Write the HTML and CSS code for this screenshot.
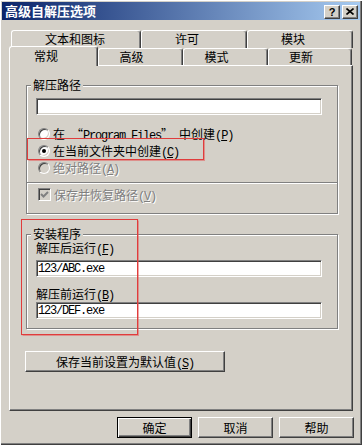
FILE: index.html
```html
<!DOCTYPE html>
<html lang="zh-CN">
<head>
  <meta charset="UTF-8">
  <title>高级自解压选项</title>
  <link rel="stylesheet" href="styles.css">
</head>
<body>
  <div class="window">
    <!-- Title bar -->
    <div class="titlebar">
      <span class="title">高级自解压选项</span>
      <div class="caption">
        <span class="cap-btn">?</span>
        <span class="cap-btn">
          <svg width="8" height="7" viewBox="0 0 8 7"><path d="M0.5 0.5 L7.5 6.5 M7.5 0.5 L0.5 6.5" stroke="#000" stroke-width="1.6"/></svg>
        </span>
      </div>
    </div>

    <div class="content">
      <!-- Tabs -->
      <div class="tab-row back">
        <div class="tab wide">文本和图标</div>
        <div class="tab">许可</div>
        <div class="tab">模块</div>
      </div>
      <div class="tab-row front">
        <div class="tab active">常规</div>
        <div class="tab">高级</div>
        <div class="tab">模式</div>
        <div class="tab last">更新</div>
      </div>

      <!-- Tab page -->
      <div class="panel">
        <fieldset class="group path">
          <legend>解压路径</legend>
          <input class="field" type="text" value="">

          <div class="options">
            <div class="option">
              <span class="radio"></span>
              <span>在<span class="en"> </span>“<span class="en">Program Files</span>”<span class="en"> </span>中创建<span class="en">(<u>P</u>)</span></span>
            </div>
            <div class="option">
              <span class="radio checked"></span>
              <span>在当前文件夹中创建<span class="en">(<u>C</u>)</span></span>
            </div>
            <div class="option disabled">
              <span class="radio"></span>
              <span>绝对路径<span class="en">(<u>A</u>)</span></span>
            </div>
          </div>

          <div class="separator"></div>

          <div class="option disabled">
            <span class="check">
              <svg width="11" height="11" viewBox="0 0 11 11"><polyline points="2,5 4.5,7.5 9,3" fill="none" stroke="#808080" stroke-width="2"/></svg>
            </span>
            <span>保存并恢复路径<span class="en">(<u>V</u>)</span></span>
          </div>
        </fieldset>

        <fieldset class="group setup">
          <legend>安装程序</legend>
          <div class="label">解压后运行<span class="en">(<u>F</u>)</span></div>
          <input class="field" type="text" value="123/ABC.exe">
          <div class="label second">解压前运行<span class="en">(<u>B</u>)</span></div>
          <input class="field tight" type="text" value="123/DEF.exe">
        </fieldset>

        <button class="btn save-btn">保存当前设置为默认值<span class="en">(<u>S</u>)</span></button>
      </div>

      <!-- Dialog buttons -->
      <div class="actions">
        <button class="btn default">确定</button>
        <button class="btn">取消</button>
        <button class="btn">帮助</button>
      </div>
    </div>

    <!-- red annotation boxes -->
    <div class="mark mark-current"></div>
    <div class="mark mark-setup"></div>
  </div>
</body>
</html>
```

FILE: styles.css
```css
/* Global */
body {
  margin: 0;
  background: #d4d0c8;
  font-family: "Noto Sans CJK SC", sans-serif;
  font-size: 12px;
  color: #000;
}

/* half-width latin text, like SimSun ascii */
.en {
  font-family: "Liberation Mono", monospace;
  letter-spacing: -1.2px;
}

.window {
  position: relative;
  width: 362px;
  height: 445px;
  box-sizing: border-box;
  padding: 2px;
  background: #d4d0c8;
  box-shadow: inset 1px 1px 0 #fff, inset -1px -1px 0 #404040, inset -2px -2px 0 #808080;
}

/* Title bar */
.titlebar {
  height: 18px;
  display: flex;
  align-items: center;
  justify-content: space-between;
  padding: 0 2px 0 3px;
  background: linear-gradient(to right, #0a246a, #a6caf0);
}

.title {
  color: #fff;
  font-weight: bold;
  font-size: 13px;
  line-height: 18px;
}

.caption {
  display: flex;
  gap: 2px;
  padding-top: 1px;
}

.cap-btn {
  width: 16px;
  height: 14px;
  box-sizing: border-box;
  border: 1px solid;
  border-color: #fff #404040 #404040 #fff;
  box-shadow: inset -1px -1px 0 #808080;
  background: #d4d0c8;
  display: flex;
  align-items: center;
  justify-content: center;
  font: bold 11px "Liberation Sans", sans-serif;
}

.content {
  margin: 10px 0 0 7px;
  width: 344px;
}

/* Tabs */
.tab-row {
  display: flex;
  height: 17px;
}

.tab-row.back {
  height: 18px;
  padding-left: 2px;
}

.tab {
  box-sizing: border-box;
  width: 106px;
  height: 100%;
  border: 1px solid #fff;
  border-right-color: #404040;
  border-bottom: 0;
  border-radius: 3px 3px 0 0;
  box-shadow: inset -1px 0 0 #808080;
  background: #d4d0c8;
  line-height: 15px;
  white-space: nowrap;
}

.back .tab {
  padding-left: 33px;
}

.back .tab.wide {
  width: 130px;
}

.front {
  align-items: flex-end;
}

.front .tab {
  width: 85px;
  text-align: center;
  padding-right: 18px;
}

.front .tab.last {
  width: 84px;
}

.front .tab.active {
  position: relative;
  z-index: 1;
  width: 89px;
  height: 20px;
  margin-bottom: -1px;
  padding-right: 15px;
  line-height: 17px;
}

/* Tab page */
.panel {
  box-sizing: border-box;
  height: 346px;
  border: 1px solid #fff;
  border-right-color: #404040;
  border-bottom-color: #404040;
  box-shadow: inset -1px -1px 0 #808080;
  padding: 12px 14px 0 16px;
}

/* Group boxes */
.group {
  margin: 0;
  min-width: 0;
  border: 1px solid #808080;
  box-shadow: 1px 1px 0 #fff, inset 1px 1px 0 #fff;
  padding: 6px 15px 10px 9px;
}

.group legend {
  height: 14px;
  margin-left: -5px;
  padding: 0 2px;
  line-height: 14px;
  background: #d4d0c8;
}

.group.setup {
  margin-top: 13px;
  padding: 0 15px 9px 9px;
}

.field {
  display: block;
  width: 286px;
  height: 17px;
  box-sizing: border-box;
  margin: 0;
  padding: 0 0 0 1px;
  border: 1px solid;
  border-color: #808080 #fff #fff #808080;
  box-shadow: inset 1px 1px 0 #404040, inset -1px -1px 0 #d4d0c8;
  background: #fff;
  outline: none;
  font-family: "Liberation Mono", monospace;
  font-size: 12px;
  letter-spacing: -1.2px;
  color: #000;
}

.setup .field {
  margin-top: 5px;
}

.setup .field.tight {
  margin-top: 1px;
}

.label {
  height: 14px;
  line-height: 14px;
  white-space: nowrap;
}

.label.second {
  margin-top: 10px;
}

/* Radio buttons and checkbox */
.options {
  margin-top: 10px;
}

.option {
  display: flex;
  align-items: center;
  gap: 3px;
  height: 17px;
  padding-left: 2px;
  white-space: nowrap;
}

.option.disabled {
  color: #808080;
  text-shadow: 1px 1px 0 #fff;
}

.radio {
  width: 12px;
  height: 12px;
  box-sizing: border-box;
  border-radius: 50%;
  border: 1px solid;
  border-color: #808080 #fff #fff #808080;
  box-shadow: inset 1px 1px 0 #404040, inset -1px -1px 0 #d4d0c8;
  background: #fff;
  display: grid;
  place-items: center;
}

.radio.checked::after {
  content: '';
  width: 4px;
  height: 4px;
  border-radius: 50%;
  background: #000;
}

.disabled .radio {
  background: #d4d0c8;
}

.check {
  width: 13px;
  height: 13px;
  box-sizing: border-box;
  border: 1px solid;
  border-color: #808080 #fff #fff #808080;
  box-shadow: inset 1px 1px 0 #404040, inset -1px -1px 0 #d4d0c8;
  background: #d4d0c8;
  display: flex;
}

.separator {
  height: 1px;
  background: #808080;
  border-bottom: 1px solid #fff;
  margin: 6px -15px 2px -9px;
}

/* Push buttons */
.btn {
  height: 21px;
  width: 75px;
  box-sizing: border-box;
  margin: 0;
  padding: 0;
  border: 1px solid;
  border-color: #fff #404040 #404040 #fff;
  box-shadow: inset -1px -1px 0 #808080;
  background: #d4d0c8;
  font-family: inherit;
  font-size: 12px;
  color: #000;
}

.save-btn {
  display: block;
  width: 200px;
  margin: 22px 0 0 -1px;
}

.actions {
  display: flex;
  justify-content: flex-end;
  gap: 6px;
  margin: 6px -1px 0 0;
}

.btn.default {
  border: 1px solid #000;
  box-shadow: inset 1px 1px 0 #fff, inset -1px -1px 0 #404040, inset -2px -2px 0 #808080;
}

/* Red annotation boxes */
.mark {
  position: absolute;
  border: 1px solid #e03c3c;
  box-shadow: 0 0 1px 0.5px rgba(230, 80, 80, 0.5);
}

.mark-current {
  left: 27px;
  top: 138px;
  width: 175px;
  height: 20px;
}

.mark-setup {
  left: 21px;
  top: 219px;
  width: 115px;
  height: 114px;
}
```
